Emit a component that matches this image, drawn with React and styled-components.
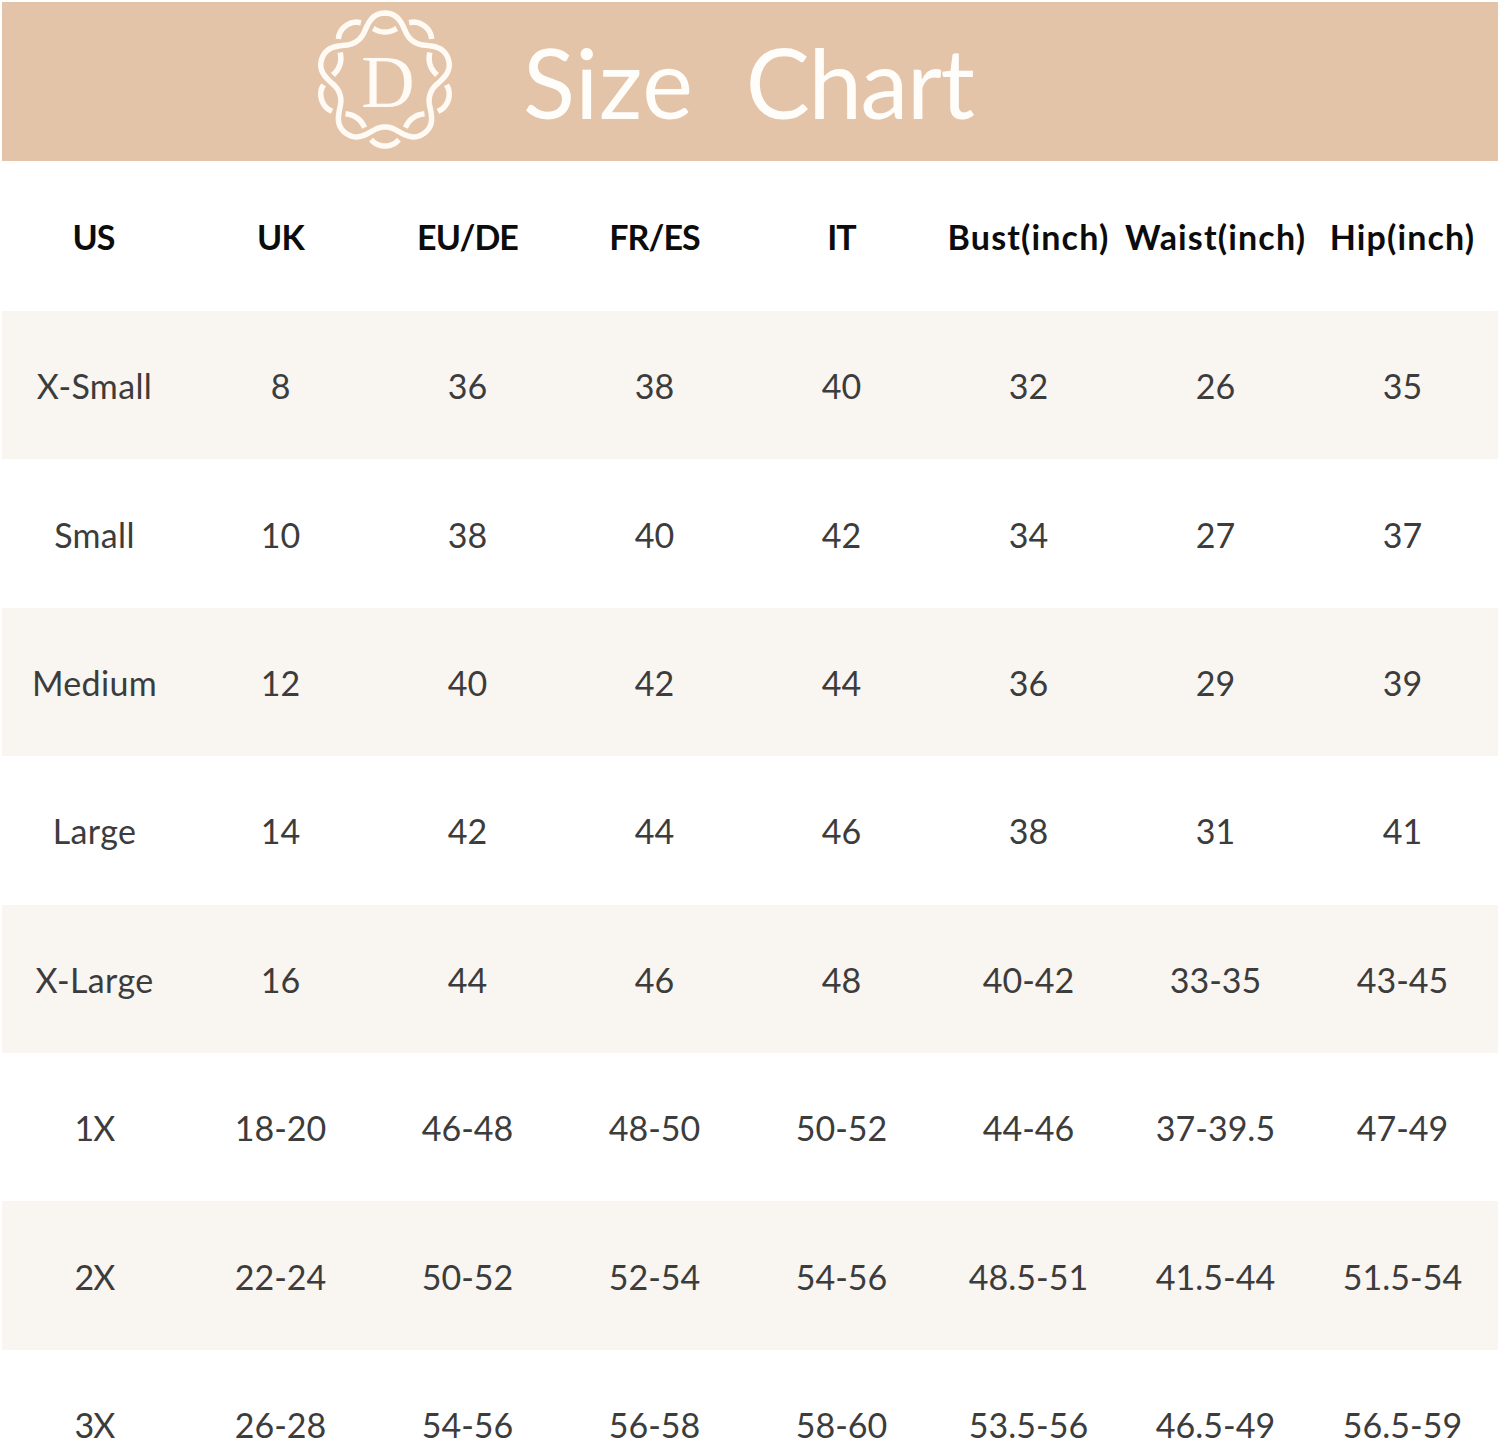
import React from "react";
import styled, { createGlobalStyle } from "styled-components";

const GlobalStyle = createGlobalStyle`
  html, body {
    margin: 0;
    height: 1441px;
    overflow: hidden;
    background: #fff;
  }
`;

const Page = styled.div`
  padding: 2px 2px 0 2px;
  font-family: "Lato", "Liberation Sans", sans-serif;
`;

const Banner = styled.header`
  height: 159px;
  background: #e3c4a9;
  display: flex;
  align-items: center;
  gap: 68px;
  padding-left: 313px;
  color: #fffdfa;
`;

const Logo = styled.svg`
  width: 140px;
  height: 150px;
  flex: none;
`;

const LogoLetter = styled.text`
  font-family: "Liberation Serif", serif;
  font-size: 74px;
  fill: #fffaf4;
`;

const Title = styled.h1`
  margin: 0;
  display: flex;
  gap: 52px;
  font-size: 96px;
  font-weight: 400;
  line-height: 1;
`;

const Word = styled.span`
  letter-spacing: ${(p) => p.$spacing}px;
`;

const Table = styled.div`
  margin-top: 1px;
`;

const Row = styled.div`
  box-sizing: border-box;
  display: grid;
  grid-template-columns: repeat(8, 187px);
  align-items: center;
  height: ${(p) => (p.$head ? "149px" : "148.4px")};
  padding-top: ${(p) => (p.$head ? "0" : "2px")};
  background: ${(p) => (p.$shade ? "#f9f5f1" : "#fff")};
`;

const Cell = styled.div`
  padding-right: 4px;
  text-align: center;
  white-space: nowrap;
  font-size: 34px;
  line-height: 40px;
  color: #3c3c3c;
`;

const SizeCell = styled(Cell)`
  padding-right: 2px;
  letter-spacing: ${(p) => (p.$short ? "-1px" : "0.35px")};
`;

const HeadCell = styled(Cell)`
  color: #0c0c0c;
  font-weight: 700;
  letter-spacing: ${(p) => (p.$lower ? "1.15px" : "-0.9px")};
`;

const headers = ["US", "UK", "EU/DE", "FR/ES", "IT", "Bust(inch)", "Waist(inch)", "Hip(inch)"];

const rows = [
  ["X-Small", "8", "36", "38", "40", "32", "26", "35"],
  ["Small", "10", "38", "40", "42", "34", "27", "37"],
  ["Medium", "12", "40", "42", "44", "36", "29", "39"],
  ["Large", "14", "42", "44", "46", "38", "31", "41"],
  ["X-Large", "16", "44", "46", "48", "40-42", "33-35", "43-45"],
  ["1X", "18-20", "46-48", "48-50", "50-52", "44-46", "37-39.5", "47-49"],
  ["2X", "22-24", "50-52", "52-54", "54-56", "48.5-51", "41.5-44", "51.5-54"],
  ["3X", "26-28", "54-56", "56-58", "58-60", "53.5-56", "46.5-49", "56.5-59"],
];

// two interwoven five-lobed waves around the centre of the logo
const CX = 70;
const CY = 72.5;
const wavePoint = (deg, sign) => {
  const t = (deg * Math.PI) / 180;
  const wave = Math.cos(5 * t) - 0.05 * Math.cos(15 * t);
  const r = 57 + sign * 10 * wave;
  return [CX + r * Math.sin(t), CY - r * Math.cos(t)];
};

const wavePath = (from, to, sign) => {
  let d = "";
  for (let a = from; a <= to; a += 2) {
    const [x, y] = wavePoint(a, sign);
    d += `${d ? "L" : "M"}${x.toFixed(2)} ${y.toFixed(2)}`;
  }
  return d;
};

const solidWave = wavePath(0, 360, 1) + "Z";
const brokenWave = Array.from({ length: 10 }, (_, i) => i * 36)
  .map((a) => wavePath(a - 13, a + 13, -1))
  .join("");

const BrandMark = () => (
  <Logo viewBox="0 0 140 150" fill="none">
    <path d={solidWave} stroke="#fffaf4" strokeWidth="5.5" strokeLinejoin="round" />
    <path d={brokenWave} stroke="#fffaf4" strokeWidth="5.5" />
    <LogoLetter x="73" y="99.5" textAnchor="middle">D</LogoLetter>
  </Logo>
);

export default function App() {
  return (
    <Page>
      <GlobalStyle />
      <Banner>
        <BrandMark />
        <Title>
          <Word $spacing={0.7}>Size</Word>
          <Word $spacing={-1.4}>Chart</Word>
        </Title>
      </Banner>
      <Table>
        <Row $head>
          {headers.map((h) => (
            <HeadCell key={h} $lower={h.includes("inch")}>{h}</HeadCell>
          ))}
        </Row>
        {rows.map((row, i) => (
          <Row key={row[0]} $shade={i % 2 === 0}>
            <SizeCell $short={row[0].length < 3}>{row[0]}</SizeCell>
            {row.slice(1).map((value, j) => (
              <Cell key={j}>{value}</Cell>
            ))}
          </Row>
        ))}
      </Table>
    </Page>
  );
}
